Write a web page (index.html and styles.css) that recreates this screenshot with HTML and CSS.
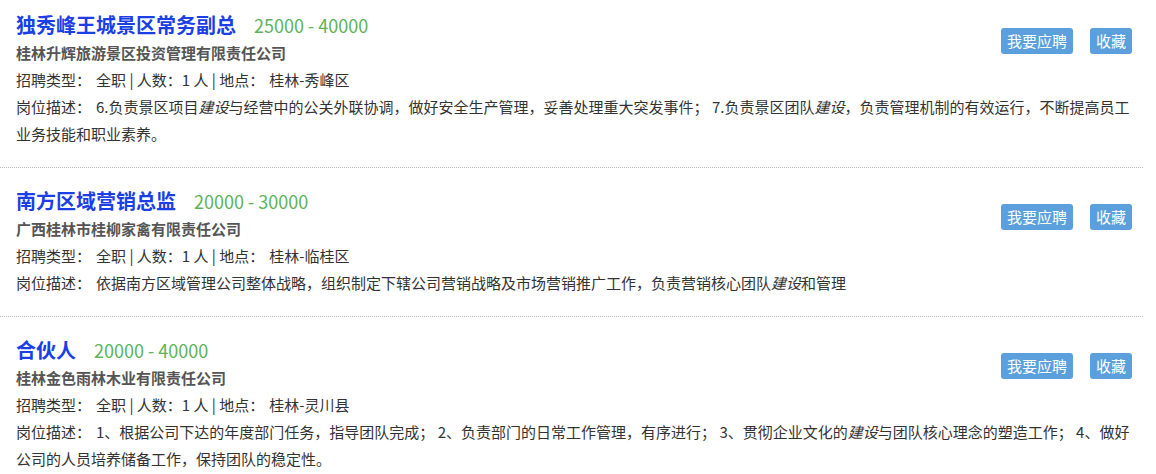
FILE: index.html
```html
<!DOCTYPE html>
<html lang="zh-CN">
<head>
    <meta charset="UTF-8">
    <meta name="viewport" content="width=device-width, initial-scale=1.0">
    <title>职位列表</title>
    <link rel="stylesheet" href="styles.css">
</head>
<body>
    <div class="job-list">
        <div class="job">
            <div class="job-actions">
                <button class="btn">我要应聘</button>
                <button class="btn">收藏</button>
            </div>
            <div class="job-head">
                <a class="job-title" href="#">独秀峰王城景区常务副总</a>
                <span class="job-salary">25000 - 40000</span>
            </div>
            <div class="job-company">桂林升辉旅游景区投资管理有限责任公司</div>
            <div class="job-info"><span class="label">招聘类型：</span>全职 | 人数：1 人 | 地点：<span class="gap"></span>桂林-秀峰区</div>
            <div class="job-desc"><span class="label">岗位描述：</span>6.负责景区项目<em>建设</em>与经营中的公关外联协调，做好安全生产管理，妥善处理重大突发事件； 7.负责景区团队<em>建设</em>，负责管理机制的有效运行，不断提高员工业务技能和职业素养。</div>
        </div>

        <div class="job">
            <div class="job-actions">
                <button class="btn">我要应聘</button>
                <button class="btn">收藏</button>
            </div>
            <div class="job-head">
                <a class="job-title" href="#">南方区域营销总监</a>
                <span class="job-salary">20000 - 30000</span>
            </div>
            <div class="job-company">广西桂林市桂柳家禽有限责任公司</div>
            <div class="job-info"><span class="label">招聘类型：</span>全职 | 人数：1 人 | 地点：<span class="gap"></span>桂林-临桂区</div>
            <div class="job-desc"><span class="label">岗位描述：</span>依据南方区域管理公司整体战略，组织制定下辖公司营销战略及市场营销推广工作，负责营销核心团队<em>建设</em>和管理</div>
        </div>

        <div class="job">
            <div class="job-actions">
                <button class="btn">我要应聘</button>
                <button class="btn">收藏</button>
            </div>
            <div class="job-head">
                <a class="job-title" href="#">合伙人</a>
                <span class="job-salary">20000 - 40000</span>
            </div>
            <div class="job-company">桂林金色雨林木业有限责任公司</div>
            <div class="job-info"><span class="label">招聘类型：</span>全职 | 人数：1 人 | 地点：<span class="gap"></span>桂林-灵川县</div>
            <div class="job-desc"><span class="label">岗位描述：</span>1、根据公司下达的年度部门任务，指导团队完成； 2、负责部门的日常工作管理，有序进行； 3、贯彻企业文化的<em>建设</em>与团队核心理念的塑造工作； 4、做好公司的人员培养储备工作，保持团队的稳定性。</div>
        </div>
    </div>
</body>
</html>
```

FILE: styles.css
```css
body {
    margin: 0;
    padding: 0;
    background-color: #fff;
    color: #333;
    font-family: "Noto Sans CJK SC", "Noto Sans", sans-serif;
    font-size: 15px;
}

/* List */
.job-list {
    width: 1143px;
}

.job {
    padding: 18px 11px 20px 16px;
    border-bottom: 1px dotted #bbb;
}

.job:first-child {
    padding-top: 10px;
}

.job:last-child {
    border-bottom: none;
}

/* Buttons on the right */
.job-actions {
    float: right;
    display: flex;
    gap: 17px;
    margin-top: 18px;
}

.btn {
    height: 26px;
    padding: 0 6px;
    border: none;
    border-radius: 3px;
    background-color: #5b9fdd;
    color: #fff;
    font-family: inherit;
    font-size: 15px;
    line-height: 26px;
    cursor: pointer;
}

/* Title row */
.job-head {
    display: flex;
    align-items: baseline;
    gap: 18px;
    height: 29px;
}

.job-title {
    color: #1b3fe6;
    font-size: 20px;
    font-weight: bold;
    line-height: 29px;
    text-decoration: none;
}

.job-salary {
    color: #5cb35a;
    font-size: 18px;
    line-height: 29px;
}

.job-company {
    color: #555;
    font-weight: bold;
    line-height: 27px;
}

.job-info,
.job-desc {
    line-height: 27px;
}

.label {
    margin-right: 5px;
}

.gap {
    display: inline-block;
    width: 5px;
}

.job-desc em {
    font-style: italic;
}
```
